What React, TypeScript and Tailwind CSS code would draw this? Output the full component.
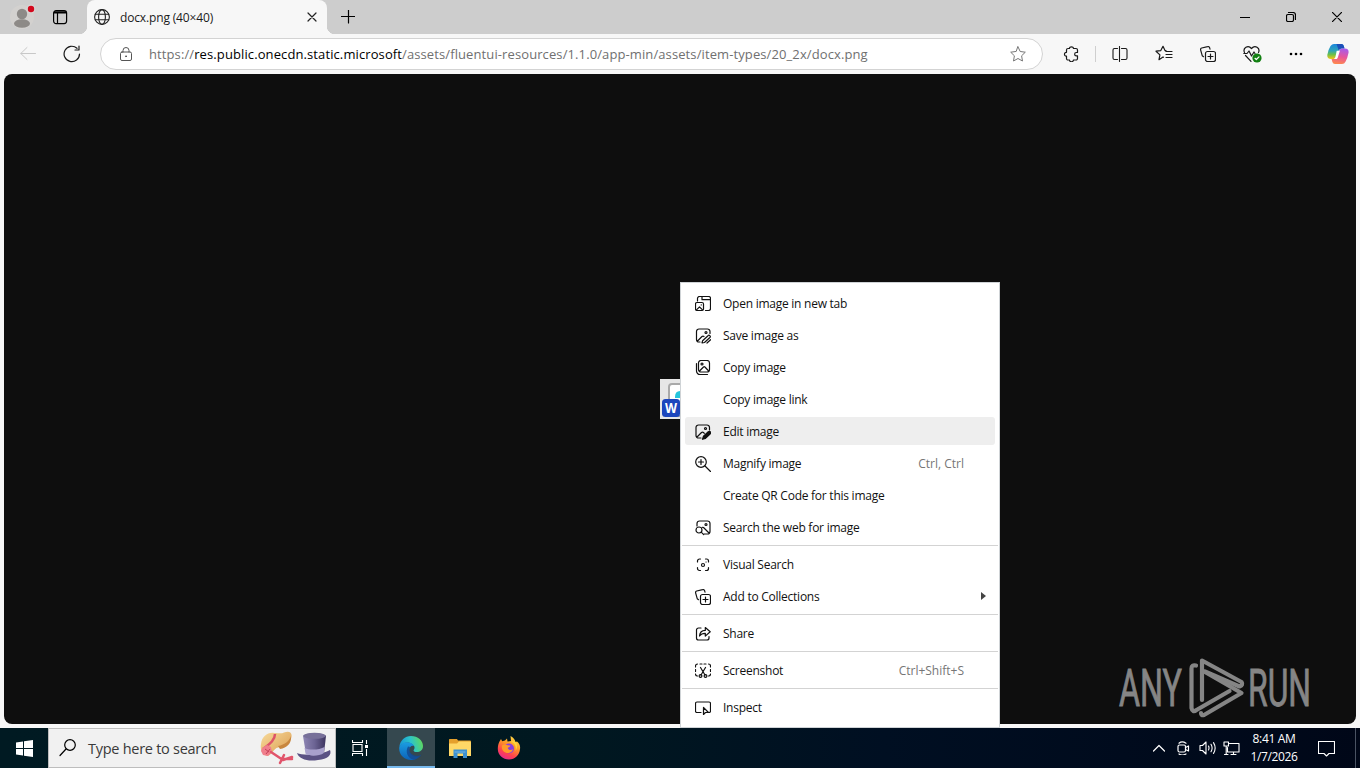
import type { ReactNode } from "react";

function Icon({ children, size = 16, className = "", sw = 1 }: { children: ReactNode; size?: number; className?: string; sw?: number }) {
  return (
    <svg width={size} height={size} viewBox={`0 0 ${size} ${size}`} fill="none" stroke="currentColor" strokeWidth={sw} strokeLinecap="round" strokeLinejoin="round" className={`shrink-0 ${className}`}>
      {children}
    </svg>
  );
}

const OpenTab = () => (
  <Icon sw={1.2}>
    <path d="M2.500 5V2.500a2 2 0 0 1 2-2h9a2 2 0 0 1 2 2v10a2 2 0 0 1-2 2h-3M7 .5v3.200h8.500" />
    <rect x=".5" y="6.500" width="8" height="8" rx="1.500" />
    <path d="M1.500 13.800l3-3 3 3M6.200 8.900h.1" />
  </Icon>
);
const SaveImg = () => (
  <Icon sw={1.2}>
    <path d="M15 5.500V3.500a2.500 2.500 0 0 0-2.500-2.500h-8.500a2.500 2.500 0 0 0-2.500 2.500v8a2.500 2.500 0 0 0 2.500 2.500h1M2.500 13l4.500-4.500q1-.8 2 0" />
    <circle cx="11" cy="4.500" r="1" />
    <path d="M7 15l.6-2.300 5.400-5a1.300 1.300 0 0 1 1.900 1.800l-5.400 5zM12 15l3.600-3.300" />
  </Icon>
);
const CopyImg = () => (
  <Icon sw={1.2}>
    <rect x="3.500" y=".5" width="11" height="11.500" rx="2.500" />
    <path d="M1.500 3.500v7.500a3.500 3.500 0 0 0 3.500 3.500h7.500M4.500 11l4-4q.7-.6 1.400 0l3.800 4" />
    <circle cx="7" cy="4" r="1" />
  </Icon>
);
const EditImg = () => (
  <Icon sw={1.2}>
    <path d="M14.500 6V3.500a2.500 2.500 0 0 0-2.500-2.500H3.500A2.500 2.500 0 0 0 1 3.500v8A2.500 2.500 0 0 0 3.500 14H6M2 13l4.500-4.500q1-.8 2 0l.8.8" />
    <circle cx="10.500" cy="4.500" r="1" />
    <path d="M7.500 15.300l1-3 4.800-4.500a1.200 1.200 0 0 1 2 1.900l-4.800 4.700z" fill="currentColor" />
  </Icon>
);
const Magnify = () => (
  <Icon sw={1.2} className="-mt-px">
    <circle cx="6" cy="6" r="5.300" />
    <path d="M10 10l5.500 5.500M6 3.500v5M3.500 6h5" />
  </Icon>
);
const SearchImg = () => (
  <Icon sw={1.2}>
    <path d="M2 6V3.500A2.500 2.500 0 0 1 4.500 1h8A2.500 2.500 0 0 1 15 3.500v8a2.500 2.500 0 0 1-2.500 2.500H9M7 7.500q.8-.5 1.500 0l5.500 5.500" />
    <circle cx="11" cy="4.500" r="1" />
    <circle cx="4" cy="10" r="3" />
    <path d="M6.200 12.200l2.500 2.500" />
  </Icon>
);
const Visual = () => (
  <Icon sw={1.2} className="-mt-px">
    <path d="M2.500 5V4A2 2 0 0 1 4.500 2h1M10.500 2h1a2 2 0 0 1 2 2v1M13.500 10.500v1a2 2 0 0 1-2 2h-1M5.500 13.500h-1a2 2 0 0 1-2-2v-1" />
    <circle cx="8" cy="8" r="1.500" />
    <path d="M11 5h.1" />
  </Icon>
);
const Collections = () => (
  <Icon sw={1.2} className="-mt-px">
    <rect x="5.500" y="5.500" width="10" height="10" rx="2" />
    <path d="M10.500 8v5M8 10.500h5M3.500 10.700L2.300 9.800 .6 3.800A1.600 1.600 0 0 1 1.700 2L7.600.6A1.600 1.600 0 0 1 9.600 1.700L10 3.200" />
  </Icon>
);
const Share = () => (
  <Icon sw={1.2} className="-mt-px">
    <path d="M6 2H3.500A2 2 0 0 0 1.500 4v8a2 2 0 0 0 2 2h8.500a2 2 0 0 0 2-2v-1.500M4.500 10q.5-5.500 5.800-5.600V1.500l4.900 4.300-4.900 4.300V7.300Q6.500 7.200 4.500 10z" />
  </Icon>
);
const Shot = () => (
  <Icon sw={1.2} className="-mt-px">
    <path d="M.5 4V3a2 2 0 0 1 2-2M5 1h2M9 1h2M13.500 1a2 2 0 0 1 2 2v1M15.500 6.500v2M.5 6.500v2M.5 11a2 2 0 0 0 2 2M15.500 11a2 2 0 0 1-2 2M5.500 4.500l4.500 7.500M10.500 4.500L6 12" />
    <circle cx="5.500" cy="13" r="1.400" />
    <circle cx="10.500" cy="13" r="1.400" />
  </Icon>
);
const Inspect = () => (
  <Icon sw={1.2} className="-mt-px">
    <path d="M6 12.500H2a1.500 1.500 0 0 1-1.500-1.500V3.500A1.500 1.500 0 0 1 2 2h12a1.500 1.500 0 0 1 1.500 1.500V11a1.500 1.500 0 0 1-1.500 1.500M8.500 7.500v7l2-2h3z" />
  </Icon>
);

function Row({ icon, label, hint, active, arrow }: { icon?: ReactNode; label: string; hint?: string; active?: boolean; arrow?: boolean }) {
  return (
    <div className={`mx-1 flex h-7 shrink-0 items-center rounded-[3px] pl-[10px] ${active ? "mt-px mb-[3px] bg-[#eeeeee] pt-[2px]" : "my-[2px]"}`}>
      <span className="flex w-[28px] shrink-0">{icon}</span>
      <span className="grow whitespace-nowrap">{label}</span>
      {hint && <span className="mr-[31px] text-[#767676] tracking-[0px]">{hint}</span>}
      {arrow && (
        <svg width="5" height="8" viewBox="0 0 5 8" className="mr-[9px] mb-0.5">
          <path d="M0 0l5 4-5 4z" fill="#444" />
        </svg>
      )}
    </div>
  );
}
const Sep = () => (
  <div className="h-[5px] shrink-0 px-px pt-px">
    <div className="h-px bg-[#d3d3d3]" />
  </div>
);

function Copilot() {
  return (
    <svg width="22" height="22" viewBox="0 0 22 22" className="shrink-0">
      <defs>
        <linearGradient id="ca" x1="0" y1="0" x2="0" y2="1">
          <stop offset="0" stopColor="#1b86dc" />
          <stop offset=".45" stopColor="#2fa5b8" />
          <stop offset=".7" stopColor="#6cc04a" />
          <stop offset="1" stopColor="#f5c518" />
        </linearGradient>
        <linearGradient id="cb" x1=".5" y1="0" x2=".3" y2="1">
          <stop offset="0" stopColor="#a95be8" />
          <stop offset=".5" stopColor="#e8559b" />
          <stop offset="1" stopColor="#ff8a4c" />
        </linearGradient>
      </defs>
      <path d="M7 1h7.500q1.800.2 2.300 2l.7 2.500h-3q-2 .1-2.700 2l-2 6q-.7 2.500-3 2.500H4q-4 0-3.700-4Q1.500 6 3.500 3 5 1 7 1z" fill="url(#ca)" />
      <path d="M9.500 1h5q1.800.2 2.300 2l.7 2.500h-3q-2 .1-2.700 2z" fill="#1d4fb8" />
      <path d="M15 21H8q-2-.2-2.600-2l-.8-3h2.600q2-.1 2.700-2l2-6q.7-2.500 3-2.500h3q4 0 3.700 4-1.200 6-3 9-1.200 2.500-3.600 2.500z" fill="url(#cb)" />
      <path d="M9.700 7.700h3.200l-2 6.600q-.3 1-1.200 1.700H6.800q1.200-.5 1.600-2z" fill="#fff" />
    </svg>
  );
}

function TitleBar() {
  return (
    <header className="flex h-[34px] shrink-0 bg-[#cdcdcd]">
      <div className="flex h-full w-[87px] items-center">
        <svg width="28" height="28" viewBox="0 0 28 28" className="ml-[9px] shrink-0">
          <circle cx="13" cy="14" r="12" fill="#d3d1cf" />
          <circle cx="13" cy="11" r="5.200" fill="#8d8a87" />
          <ellipse cx="13" cy="20.500" rx="8" ry="4.300" fill="#8d8a87" />
          <circle cx="22" cy="6" r="4.500" fill="#d7d5d3" />
          <circle cx="22" cy="6" r="3.200" fill="#d3081d" />
        </svg>
        <Icon className="ml-[15px] text-black" size={16} sw={1.2}>
          <rect x="1.600" y="1.600" width="13" height="13" rx="2.500" />
          <path d="M2 3.400h12" strokeWidth="2.200" strokeLinecap="butt" />
          <path d="M5.500 4v10" strokeLinecap="butt" />
        </Icon>
      </div>
      <div className="relative flex h-full w-[240px] items-center rounded-t-lg bg-[#f7f7f7] pl-[7px] text-[12px] text-[#1b1b1b]">
        <span className="absolute bottom-0 -left-2 size-2 bg-[radial-gradient(circle_at_0_0,#cdcdcd_8px,#f7f7f7_8.5px)]" />
        <span className="absolute -right-2 bottom-0 size-2 bg-[radial-gradient(circle_at_100%_0,#cdcdcd_8px,#f7f7f7_8.5px)]" />
        <Icon size={16} sw={1.100} className="text-[#222]">
          <circle cx="8" cy="8" r="7.400" />
          <ellipse cx="8" cy="8" rx="3.400" ry="7.400" />
          <path d="M1.300 5.300h13.400M1.300 10.700h13.400" />
        </Icon>
        <span className="ml-[10px] grow pt-px tracking-[-0.15px]">docx.png (40×40)</span>
        <Icon size={10} className="mr-[10px] text-[#222]" sw={1.200}>
          <path d="M1 1l8 8M9 1L1 9" />
        </Icon>
      </div>
      <Icon size={14} className="mt-[10px] ml-[14px]" sw={1.2}>
        <path d="M.5 6.500h13M7.500 0v13" />
      </Icon>
      <div className="ml-auto flex items-center gap-9 pr-[18px]">
        <Icon size={10} sw={1.2}>
          <path d="M0 5.500h10" />
        </Icon>
        <Icon size={10} sw={1.2}>
          <rect x=".5" y="2.500" width="7" height="7" rx="1.500" />
          <path d="M2.500.5h4.500a2.500 2.500 0 0 1 2.500 2.500v4.500" />
        </Icon>
        <Icon size={10} sw={1.2}>
          <path d="M0 0l10 10M10 0L0 10" />
        </Icon>
      </div>
    </header>
  );
}

function Toolbar() {
  return (
    <div className="flex h-10 shrink-0 items-center bg-[#f7f7f7] text-[#1a1a1a]">
      <Icon size={16} className="ml-5 text-[#c8c8c8]">
        <path d="M15.500 7.500H.8M7 1.500l-6.200 6 6.200 6" />
      </Icon>
      <Icon size={18} className="ml-[27px]" sw={1.200}>
        <path d="M16.500 9a7.700 7.700 0 1 1-2.500-5.700M16 1v4h-4" />
      </Icon>
      <div className="ml-[19px] flex h-[32px] w-[943px] items-center rounded-full border border-[#d3d3d3] bg-white text-[#707070]">
        <Icon size={14} className="ml-[18px] text-[#555]">
          <rect x="1.500" y="5" width="11" height="8.500" rx="1.500" />
          <path d="M4 5V3.500a3 3 0 0 1 6 0V5" />
          <circle cx="7" cy="9.300" r=".5" fill="currentColor" />
        </Icon>
        <span className="ml-4 grow pt-px text-[13px] whitespace-nowrap tracking-[0.105px]">
          https://<span className="text-black">res.public.onecdn.static.microsoft</span>/assets/fluentui-resources/1.1.0/app-min/assets/item-types/20_2x/docx.png
        </span>
        <Icon size={16} className="mr-[16px] text-[#777]">
          <path d="M8 .8l2.200 4.700 5.100.7-3.700 3.600.9 5.200L8 12.500 3.500 15l.9-5.200L.7 6.200l5.100-.7z" />
        </Icon>
      </div>
      <Icon className="ml-[20px]" size={16} sw={1.200}>
        <path d="M6.500 2.500c-.3-2.300 4.200-2.300 3.900 0h2.600a1.500 1.500 0 0 1 1.500 1.500v2.500h-1.200c-2.200 0-2.200 3.300 0 3.300h1.200V12.500a1.500 1.500 0 0 1-1.500 1.500h-2.600c.3 2.300-4.200 2.300-3.900 0H5A1.500 1.500 0 0 1 3.500 12.500V10.200c-2.700.3-2.700-4 0-3.900V4A1.500 1.500 0 0 1 5 2.500z" />
      </Icon>
      <div className="ml-4 h-4 w-px bg-[#cfcfcf]" />
      <Icon className="ml-4" size={16} sw={1.1}>
        <path d="M5.500 2.500H2.500a1.500 1.500 0 0 0-1.500 1.500v8a1.500 1.500 0 0 0 1.500 1.500h3M9.500 2.500h4a1.500 1.500 0 0 1 1.500 1.500v8a1.500 1.500 0 0 1-1.500 1.500h-4M7.500.5v15" />
      </Icon>
      <Icon className="ml-[27px]" size={18} sw={1.200}>
        <path d="M8.500 12.300L8 12l-4 2.700.9-4.800L1 6.200l4.800-.6L8 1.300l2 4.300 1 .1M11 6.500h6M11 9.500h6M11 12.500h6" />
      </Icon>
      <div className="ml-[27px] flex"><Collections /></div>
      <svg width="19" height="17" viewBox="0 0 19 17" fill="none" stroke="#1a1a1a" strokeWidth="1.200" strokeLinejoin="round" strokeLinecap="round" className="mt-px ml-[27px] shrink-0">
        <path d="M1.500 6.500C-.5 2 5-1.500 8.500 2.500 12-1.500 17.500 2 15.500 6.500M.8 7.500H4L6 5l2.500 5L11 6l1 1.500M2.500 9.500l5.500 5.800" />
        <circle cx="14" cy="12" r="4.600" fill="#128012" stroke="none" />
        <path d="M12 12.300l1.300 1.200 2.700-2.700" stroke="#fff" />
      </svg>
      <svg width="14" height="4" viewBox="0 0 14 4" className="ml-[27px] shrink-0">
        <circle cx="2" cy="2" r="1.300" />
        <circle cx="7" cy="2" r="1.300" />
        <circle cx="12" cy="2" r="1.300" />
      </svg>
      <div className="ml-auto pr-[11px]"><Copilot /></div>
    </div>
  );
}

function Watermark() {
  return (
    <svg width="204" height="66" viewBox="0 0 204 66" className="absolute right-[36px] bottom-[3px]">
      <g fill="#858585" stroke="#858585" strokeWidth=".9" fontFamily="Roboto" fontSize="52" fontWeight="400">
        <text x="3" y="51" textLength="63" lengthAdjust="spacingAndGlyphs">ANY</text>
        <text x="132" y="51" textLength="63" lengthAdjust="spacingAndGlyphs">RUN</text>
      </g>
      <g fill="none" stroke="#858585" strokeWidth="4.200" strokeLinejoin="round" strokeLinecap="round">
        <path d="M86 45V5.500L125.500 27q2 3-2 4.500L89 16.500" />
        <path d="M80 10.500q-4.500-1-4.500 3V53q1 5 5 2l33-19" />
        <path d="M89 17l36.500 21L88 60q-3 1-3-2" />
      </g>
    </svg>
  );
}

function Edge() {
  return (
    <svg width="24" height="24" viewBox="0 0 24 24">
      <defs>
        <linearGradient id="ea" x1="0" y1=".5" x2="1" y2=".3">
          <stop offset="0" stopColor="#1694d8" />
          <stop offset=".5" stopColor="#2cc4c9" />
          <stop offset="1" stopColor="#62d957" />
        </linearGradient>
        <linearGradient id="eb" x1="0" y1="0" x2="0" y2="1">
          <stop offset="0" stopColor="#1b9de2" />
          <stop offset="1" stopColor="#0c62b8" />
        </linearGradient>
      </defs>
      <path d="M.3 11C1 4.500 6 0 12 0c7 0 12 4.800 12 10 0 4-3 6-6.200 6-2.300 0-3.600-1-3.200-1.800 1.200-1.500 1.200-3.200.4-4.200C12 5.500 5 5 .3 11z" fill="url(#ea)" />
      <path d="M.2 11.500C1.500 8 5 6 8.500 6.300c3.500.2 6 1.900 6.500 3.700-2-1-5 .8-4.900 4.300.2 4.200 5 8.500 10.400 5.600C18 23 14.500 24 12 24 5 24-.2 18.500.2 11.500z" fill="url(#eb)" />
      <path d="M9 10.500c-3 5-.5 12 5.500 13.200 3-.3 6.500-2.300 8-5.200-1.500 1-3.500 1.500-5.500 1.200-5-.7-8-4.700-6-8.700z" fill="#144a90" opacity=".85" />
    </svg>
  );
}

function Folder() {
  return (
    <svg width="22" height="20" viewBox="0 0 22 20">
      <path d="M0 1.500Q0 1 .8 1H8l1 1.500H21q1 0 1 1V18H0z" fill="#e5a02c" />
      <path d="M0 5.500h8l2-2h11q1 0 1 1V18H0z" fill="#ffd867" />
      <path d="M4.500 11.500h13.500V20h-4v-4.500H8.500V20h-4z" fill="#3d91d1" />
      <path d="M5.500 14h11" stroke="#78b7e5" />
    </svg>
  );
}

function Firefox() {
  return (
    <svg width="24" height="24" viewBox="0 0 24 24">
      <defs>
        <linearGradient id="fa" x1=".8" y1="0" x2=".3" y2="1">
          <stop offset="0" stopColor="#ffe14a" />
          <stop offset=".4" stopColor="#ff9a26" />
          <stop offset=".75" stopColor="#ff4050" />
          <stop offset="1" stopColor="#e52a8e" />
        </linearGradient>
      </defs>
      <path d="M2.500 5.500L4 3l1.200 2.200L8 4.500l2-2 .5 3L14 5l-.5-5c3 1.500 4.500 3.500 5 6l1.500-.5C22.500 7.500 23.500 10 23 13c-.5 6-5 10.500-11 10.500S.8 19 .8 13c0-2.500.5-5.500 1.700-7.500z" fill="url(#fa)" />
      <circle cx="12" cy="12.500" r="5" fill="#8a3ce0" />
      <path d="M5 9.500c2-1.500 4-1 5.500-.3 1.500.3 2.800 0 2.800.8-.3 1-2 1-2.500 2 .3 2 3 2.500 5.200 1.300-1 4-6.500 5-9.500 2C5 13.500 4.500 11.500 5 9.500z" fill="#ff9b2a" />
      <path d="M14 5.500c4 1.500 5.500 5 4.500 9.500 1.500-2 2-5 1-8L17 5z" fill="#ffd43c" />
    </svg>
  );
}

function Hats() {
  return (
    <svg width="72" height="34" viewBox="0 0 72 34" className="mr-[3px] shrink-0">
      <defs>
        <linearGradient id="ha" x1="0" y1="0" x2="1" y2="0">
          <stop offset="0" stopColor="#8e86b4" />
          <stop offset=".5" stopColor="#6c6494" />
          <stop offset="1" stopColor="#3c345e" />
        </linearGradient>
        <linearGradient id="hb" x1="0" y1="0" x2="1" y2="1">
          <stop offset="0" stopColor="#f8dc9c" />
          <stop offset="1" stopColor="#d99a4e" />
        </linearGradient>
      </defs>
      <path d="M1 13C2 5 8 1 14 2c5 0 7 1 10-.5 6-2.500 9 1 7 6-2 6-9 8-13 9-5 1-7 10-12 8C2 23 0 18 1 13z" fill="url(#hb)" />
      <path d="M18 15c7-1 12-6 13-10 1 7-4 12-11 13z" fill="#c8873f" />
      <path d="M15 3c0 7-7 11-12 15" stroke="#dd5368" strokeWidth="2.500" fill="none" />
      <path d="M2 17l5-3 4 2 1 5-4 4-5-1-2-4z" fill="#f07f8c" />
      <path d="M5 18l4 3M6 23l4-5" stroke="#c43f58" strokeWidth="1" />
      <path d="M11 21l12 8M24 24l-4 8M22 28l10 0M23 29l9-3" stroke="#e1546b" strokeWidth="2.500" strokeLinecap="round" />
      <path d="M37 22c6 3 25 2 33-3 2 5-2 9-12 10-10 2-19-1-21-7z" fill="#5b5284" />
      <path d="M43 5l3 18c5 2 13 2 18-1l2-17c-4-4-20-4-23 0z" fill="url(#ha)" />
      <path d="M44.500 17c5 2.500 15 2 20-1l-.6 6c-4 3-13 3.500-18 1.500z" fill="#a9a1cd" />
      <ellipse cx="54.500" cy="4.800" rx="11.300" ry="3" fill="#777099" />
    </svg>
  );
}

function Taskbar() {
  return (
    <footer className="flex h-10 shrink-0 items-center bg-[linear-gradient(90deg,#001a22_0%,#001820_42%,#000f22_65%,#000718_100%)] text-white">
      <div className="flex h-full w-12 items-center justify-center">
        <svg width="17" height="17" viewBox="0 0 17 17" fill="white">
          <path d="M0 2.500L7 1.500V8H0zM8 1.300L17 0v8H8zM0 9h7v6.500l-7-1zM8 9h9v8l-9-1.300z" />
        </svg>
      </div>
      <div className="flex h-full w-[288px] items-center border border-[#bdbdbd] bg-[#f1f1f1] text-[#3a3a3a]">
        <Icon size={18} className="ml-[10px] text-black" sw={1.200}>
          <circle cx="11" cy="6" r="5.300" />
          <path d="M7 10l-6 6.500" />
        </Icon>
        <span className="ml-[11px] grow pt-[2px] text-[14.5px] whitespace-nowrap tracking-[-0.27px]">Type here to search</span>
        <Hats />
      </div>
      <div className="flex h-full w-[51px] items-center pl-4">
        <svg width="17" height="16" viewBox="0 0 17 16" fill="none" stroke="white" strokeWidth="1.100">
          <path d="M.5 0v2.500h10V0M.5 16v-2.500h10V16M1 4.500h9v7H1zM14.500 0v4M14.500 9v7" />
          <path d="M13 5h3v3h-3z" fill="white" stroke="none" />
        </svg>
      </div>
      <div className="flex h-full w-12 items-center justify-center border-b-2 border-[#76b9ed] bg-[#35484f] pt-0.5"><Edge /></div>
      <div className="flex w-[49px] justify-center"><Folder /></div>
      <div className="flex w-[49px] justify-center"><Firefox /></div>
      <div className="ml-auto flex h-full items-center">
        <Icon size={12} sw={1.200}><path d="M.5 9L6 3.500 11.500 9" /></Icon>
        <Icon size={14} className="ml-[12px]" sw={1.200}>
          <rect x="1" y="4" width="7.500" height="7" rx="1.500" />
          <path d="M8.500 6.500l3-1.500v5l-3-1.500M2 2.200q3-2.500 7 0M2 13q3 2 7 0" />
        </Icon>
        <Icon size={18} className="ml-[8px]" sw={1.1}>
          <path d="M1 6.500h2.500L7 3v12l-3.500-3.500H1zM9.500 7q1 2 0 4M12 5.300q2.200 3.700 0 7.400M14.500 3.600q3.300 5.400 0 10.800" />
        </Icon>
        <Icon size={17} className="ml-[6px]" sw={1.1}>
          <path d="M6.500 3.500H16v8.500H4.500V7.500M8 14.500h5M10.500 12v2.500M1 2h4.500v4H1zM3.200 6v8M1.500 14.500H5" />
        </Icon>
        <div className="ml-[4px] w-[60px] text-center text-[12px] leading-[18px] tracking-[-0.35px] whitespace-nowrap">
          <div>8:41 AM</div>
          <div>1/7/2026</div>
        </div>
        <Icon size={17} className="ml-[14px]" sw={1.1}>
          <path d="M.5 1.500h16v12h-5.500L8.500 16 6 13.500H.5z" />
        </Icon>
        <div className="ml-5 h-full w-px bg-[#4a5363]" />
        <div className="w-1" />
      </div>
    </footer>
  );
}

export default function App() {
  return (
    <div className="relative flex h-[768px] w-[1360px] flex-col overflow-hidden bg-[#f7f7f7] font-['Open_Sans','Noto_Sans',sans-serif]">
      <TitleBar />
      <Toolbar />
      <main className="relative mx-1 mb-1 grow overflow-hidden rounded-lg bg-[#0e0e0e]">
        <svg width="40" height="40" viewBox="0 0 40 40" className="absolute top-[305px] left-[656px]">
          <path d="M0 0h40v40H0z" fill="#e6e6e6" />
          <rect x="9" y="5" width="26" height="32" rx="3" fill="#fff" stroke="#a9a9a9" strokeWidth="2" />
          <path d="M15 18q0-6 5-6h4v7h-9z" fill="#25c4dc" />
          <rect x="2" y="20" width="18" height="18" rx="3.500" fill="#1c46bd" />
          <text x="11" y="34" textAnchor="middle" fontSize="13.500" fontWeight="700" fill="#fff" fontFamily="Open Sans" textLength="12" lengthAdjust="spacingAndGlyphs">W</text>
        </svg>
        <Watermark />
      </main>
      <Taskbar />
      <div className="absolute top-[282px] left-[680px] flex h-[446px] w-[320px] flex-col border border-[#cfd3d6] bg-white pt-[5px] text-[12px] text-[#111] tracking-[-0.25px]">
        <Row icon={<OpenTab />} label="Open image in new tab" />
        <Row icon={<SaveImg />} label="Save image as" />
        <Row icon={<CopyImg />} label="Copy image" />
        <Row label="Copy image link" />
        <Row icon={<EditImg />} label="Edit image" active />
        <Row icon={<Magnify />} label="Magnify image" hint="Ctrl, Ctrl" />
        <Row label="Create QR Code for this image" />
        <Row icon={<SearchImg />} label="Search the web for image" />
        <Sep />
        <Row icon={<Visual />} label="Visual Search" />
        <Row icon={<Collections />} label="Add to Collections" arrow />
        <Sep />
        <Row icon={<Share />} label="Share" />
        <Sep />
        <Row icon={<Shot />} label="Screenshot" hint="Ctrl+Shift+S" />
        <Sep />
        <Row icon={<Inspect />} label="Inspect" />
      </div>
    </div>
  );
}
